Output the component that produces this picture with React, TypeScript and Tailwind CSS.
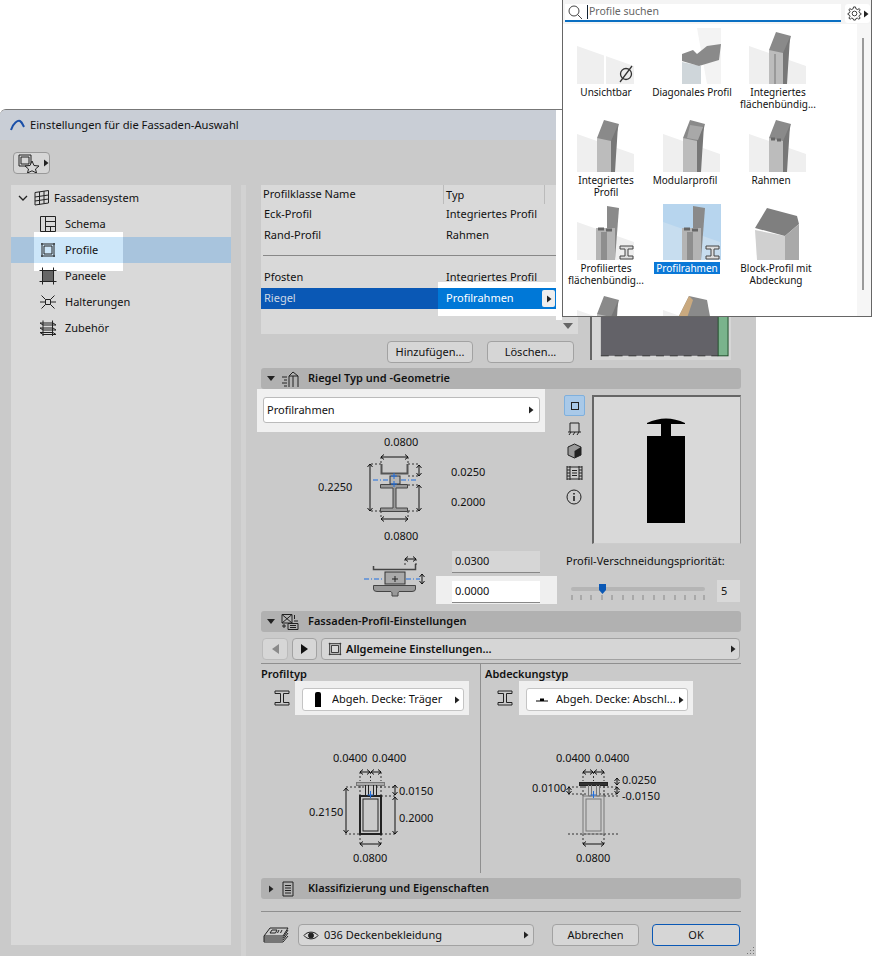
import React from 'react';

const Caret = ({ className = '' }: { className?: string }) => (
  <svg width="6" height="8" viewBox="0 0 6 8" className={className}><path d="M1 0.5 L5.5 4 L1 7.5 Z" fill="#222" /></svg>
);

// tree + section icons
const GridIcon = () => (
  <svg width="18" height="18" viewBox="0 0 18 18" fill="none" stroke="#222"><path d="M3 3.5 L16.5 1.5 V14 L3 16 Z M3 8 L16.5 6 M3 12 L16.5 10 M7.5 3 V15.5 M12 2 V14.5" /></svg>
);
const SchemaIcon = () => (
  <svg width="18" height="18" viewBox="0 0 18 18" fill="none" stroke="#222"><path d="M1.5 1.5 H16.5 V16.5 H1.5 Z M6.5 1.5 V16.5 M6.5 6.5 H16.5 M6.5 11.5 H16.5 M11.5 11.5 V16.5" /></svg>
);
const ProfileIcon = ({ size = 18 }: { size?: number }) => (
  <svg width={size} height={size} viewBox="0 0 18 18" fill="none" stroke="#222"><path d="M3 3 H15 V15 H3 Z M5 5 H13 V13 H5 Z M2 3 H3 M15 3 H16 M2 15 H3 M15 15 H16 M3 2 V3 M15 2 V3 M3 15 V16 M15 15 V16" /></svg>
);
const PanelIcon = () => (
  <svg width="18" height="18" viewBox="0 0 18 18" fill="none" stroke="#222"><path d="M3.5 3.5 H14.5 V14.5 H3.5 Z" fill="#666" /><path d="M0.5 3.5 H17.5 M0.5 14.5 H17.5 M3.5 0.5 V17.5 M14.5 0.5 V17.5" /></svg>
);
const BracketIcon = () => (
  <svg width="18" height="18" viewBox="0 0 18 18" fill="none" stroke="#222"><path d="M6.5 6.5 H11.5 V11.5 H6.5 Z M6.5 6.5 L2.5 2.5 M11.5 6.5 L15.5 2.5 M6.5 11.5 L2.5 15.5 M11.5 11.5 L15.5 15.5 M1 9 H6.5 M11.5 9 H17" /></svg>
);
const AccessoryIcon = () => (
  <svg width="18" height="18" viewBox="0 0 18 18" fill="none" stroke="#222"><path d="M1 4 H14 L17 6 H4 Z M1 9 H14 L17 11 H4 Z M1 13.5 H14 L17 15.5 H4 Z M4 1.5 V17 M13.5 1.5 V17" /></svg>
);
const IBeam = () => (
  <svg width="16" height="16" viewBox="0 0 16 16" fill="none" stroke="#222"><path d="M1 1 H15 V3.5 H9.5 V12.5 H15 V15 H1 V12.5 H6.5 V3.5 H1 Z" strokeLinejoin="round" /></svg>
);

function TreeRow({ icon, label, selected }: { icon: React.ReactNode; label: string; selected?: boolean }) {
  return (
    <div className={`relative flex h-[26px] items-center pl-[28px] ${selected ? 'bg-[#a8c4dd]' : ''}`}>
      {selected && <div className="absolute left-[23px] top-0 h-[26px] w-[89px] bg-[#cce6f9] shadow-[0_-5px_0_#fff,0_8px_0_#fff]" />}
      <span className="relative flex w-[26px] items-center">{icon}</span>
      <span className="relative">{label}</span>
    </div>
  );
}

function Btn({ children, className = '', border = 'border-[#a2a2a2]' }: { children: React.ReactNode; className?: string; border?: string }) {
  return (
    <div className={`flex h-[22px] items-center justify-center rounded-[4px] border bg-[#d6d6d6] ${border} ${className}`}>{children}</div>
  );
}

function SectionHeader({ open = true, icon, title }: { open?: boolean; icon: React.ReactNode; title: string }) {
  return (
    <div className="relative z-10 flex h-[21px] items-center rounded-[3px] bg-[#b1b1b1] font-semibold">
      <span className="flex w-[20px] justify-center">
        {open ? <svg width="8" height="5" viewBox="0 0 8 5"><path d="M0 0 H8 L4 5 Z" fill="#222" /></svg> : <Caret />}
      </span>
      <span className="flex w-[27px] items-center">{icon}</span>
      <span>{title}</span>
    </div>
  );
}

function Label({ x, y, children }: { x: number; y: number; children: React.ReactNode }) {
  return <span className="absolute leading-[14px]" style={{ left: x, top: y - 7 }}>{children}</span>;
}

const VArrow = ({ x, y1, y2 }: { x: number; y1: number; y2: number }) => (
  <path d={`M${x} ${y1} V${y2} M${x - 2.5} ${y1 + 3} L${x} ${y1} L${x + 2.5} ${y1 + 3} M${x - 2.5} ${y2 - 3} L${x} ${y2} L${x + 2.5} ${y2 - 3}`} stroke="#111" fill="none" />
);
const HArrow = ({ y, x1, x2 }: { y: number; x1: number; x2: number }) => (
  <path d={`M${x1} ${y} H${x2} M${x1 + 3} ${y - 2.5} L${x1} ${y} L${x1 + 3} ${y + 2.5} M${x2 - 3} ${y - 2.5} L${x2} ${y} L${x2 - 3} ${y + 2.5}`} stroke="#111" fill="none" />
);

function MainDiagram() {
  return (
    <svg viewBox="261 423 299 121" width="299" height="121" className="absolute left-0 top-0">
      <g stroke="#333" strokeDasharray="2 2" fill="none">
        <path d="M371 464 H381 M408 464 H420 M381 457 V464 M408 457 V464 M371 511 H381 M408 511 H420 M381 511 V519 M408 511 V519 M408 485 H420 M408 476 H420" />
      </g>
      <path d="M381.5 464 V473.5 H407.5 V464" stroke="#555" strokeWidth="2" fill="none" />
      <rect x="390" y="476" width="10" height="8" fill="#b5b5b5" stroke="#333" />
      <path d="M380.5 484.5 H407.5 V488 H396 V508 H407.5 V511.5 H380.5 V508 H393 V488 H380.5 Z" fill="#999" stroke="#444" />
      <HArrow y={457} x1={381} x2={408} />
      <HArrow y={519} x1={381} x2={408} />
      <VArrow x={370} y1={464} y2={511} />
      <VArrow x={419} y1={465} y2={476} />
      <VArrow x={419} y1={485} y2={511} />
      <path d="M373 480 H389 M401 480 H416" stroke="#1f6fe0" strokeDasharray="5 2 1 2" />
      <path d="M394 473 V479 M391 476 H397 M394 481 V487 M391 484 H397" stroke="#1f6fe0" />
    </svg>
  );
}

function SmallDiagram() {
  return (
    <svg width="70" height="50" viewBox="360 552 70 50" className="mt-[8px]">
      <path d="M373.5 566 V569.5 H415.5 V564" fill="none" stroke="#444" strokeWidth="1.5" />
      <rect x="385" y="572" width="20" height="12" fill="#aaa" stroke="#333" />
      <path d="M373.5 585.5 H415.5 V589 Q415.5 591.5 412 591.5 H399 Q397.5 592 398 596 H392 Q392.5 592 391 591.5 H377 Q373.5 591.5 373.5 589 Z" fill="#999" stroke="#444" />
      <path d="M405 565 V559 M416 565 V559" stroke="#333" strokeDasharray="2 2" />
      <HArrow y={559} x1={405} x2={416} />
      <VArrow x={422} y1={574} y2={584} />
      <path d="M364 579 H384 M406 579 H420" stroke="#1f6fe0" strokeDasharray="5 2 1 2" />
      <path d="M395 576 V582 M392 579 H398" stroke="#222" />
    </svg>
  );
}

function ProfileDiagram({ dim, left }: { dim: 'cover' | 'profile'; left: string }) {
  const box = dim === 'profile' ? '#222' : '#777';
  return (
    <svg width="100" height="125" viewBox="340 745 100 125" className={`absolute top-0 ${left}`}>
      <g stroke="#333" strokeDasharray="2 2" fill="none">
        <path d="M360 773 V782 M381 773 V782 M370.5 773 V782 M360 787 V797 M381 787 V797 M360 835 V846 M381 835 V846 M345 835 H396 M381 797 H396 M376 788 H396" />
        {dim === 'profile' && <path d="M346 788 H365" />}
        {dim === 'cover' && <path d="M345 788 H365 M345 795 H366 M376 795 H396" />}
      </g>
      <HArrow y={773} x1={360} x2={370} />
      <HArrow y={773} x1={371} x2={381} />
      <HArrow y={845} x1={360} x2={381} />
      <rect x="356.5" y="783.5" width="28" height="3" fill={dim === 'profile' ? '#aaa' : '#333'} stroke={dim === 'profile' ? '#777' : '#222'} />
      <path d="M365.5 786 V797 H368.5 V786 M373.5 786 V797 H376.5 V786" stroke={box} fill="none" />
      <rect x="360" y="797" width="21" height="38" fill="none" stroke={box} strokeWidth={dim === 'profile' ? 2 : 1} />
      <rect x="363" y="800" width="15" height="32" fill="none" stroke={box} />
      {dim === 'profile' ? (
        <>
          <VArrow x={346} y1={789} y2={834} />
          <VArrow x={395} y1={786} y2={796} />
          <VArrow x={395} y1={798} y2={835} />
        </>
      ) : (
        <>
          <VArrow x={346} y1={788} y2={795} />
          <VArrow x={394} y1={779} y2={786} />
          <VArrow x={394} y1={788} y2={795} />
        </>
      )}
      <path d="M370.5 792 V799 M367.5 796 H373.5" stroke="#1f6fe0" />
    </svg>
  );
}

type ThumbKind = 'none' | 'diag' | 'flat' | 'solid' | 'modular' | 'frame' | 'shaped' | 'block' | 'wood';

function Thumb({ kind, badge, selected }: { kind: ThumbKind; badge?: 'none' | 'i'; selected?: boolean }) {
  return (
    <svg width="58" height="56" viewBox="0 0 58 56" className={selected ? 'bg-[#b7d5ee]' : ''}>
      {kind !== 'block' && kind !== 'diag' && <path d="M0 18 L57 38 V56 H0 Z" fill={selected ? '#c7ddef' : '#efefef'} />}
      {kind === 'none' && <path d="M28 26 V56" stroke="#fff" strokeWidth="2" />}
      {(kind === 'flat' || kind === 'solid' || kind === 'frame' || kind === 'modular') && (
        <>
          <path d="M20 22 L27 4 L42 8 L37 28 V56 H20 Z" fill="#8a8a8a" />
          <path d="M20 22 L34 25 V56 H20 Z" fill="#bcbcbc" />
          <path d="M34 25 L41 9 L38 56 H34 Z" fill="#777" />
          {kind === 'frame' && <path d="M22 23 H26 M28 24 H32" stroke="#666" strokeWidth="3" />}
          {kind === 'modular' && <path d="M27 9 L40 11 L35 24 L24 22 Z" fill="#a8a8a8" />}
          {kind === 'flat' && <path d="M26 26 V56" stroke="#999" strokeWidth="2" />}
        </>
      )}
      {kind === 'diag' && (
        <>
          <path d="M34 0 L58 0 V56 H44 Z" fill="#f3f3f3" />
          <path d="M19 34 V56 H38 V38 Z" fill="#cfd6da" />
          <path d="M19 26 L30 22 L34 26 L44 18 L58 16 L56 32 L36 38 L19 33 Z" fill="#8a8a8a" />
        </>
      )}
      {kind === 'shaped' && (
        <>
          <path d="M30 2 L42 4 L38 56 H30 Z" fill="#8a8a8a" />
          <path d="M19 24 H38 V56 H19 Z" fill="#b4b4b4" />
          <path d="M24 28 H30 V56 H24 Z" fill="#8e8e8e" />
          <path d="M21 25 H27 M29 26 H35" stroke="#666" strokeWidth="3" />
        </>
      )}
      {kind === 'block' && (
        <>
          <path d="M6 26 L36 32 V56 H8 Z" fill="#d0d0d0" />
          <path d="M6 24 L18 4 L48 12 L50 20 L36 32 Z" fill="#7f7f7f" />
          <path d="M36 32 L50 20 V56 H36 Z" fill="#a9a9a9" />
        </>
      )}
      {kind === 'wood' && (
        <>
          <path d="M16 24 L26 4 L44 8 L48 30 Z" fill="#8a8a8a" />
          <path d="M16 24 L26 4 L30 8 L24 26 Z" fill="#c9a97f" />
        </>
      )}
      {badge === 'none' && (
        <g stroke="#333" strokeWidth="1.3" fill="none"><circle cx="49" cy="46" r="5.5" /><path d="M43 54 L55 38" /></g>
      )}
      {badge === 'i' && (
        <path d="M43 42 H56 V45 H51 V52 H56 V55 H43 V52 H48 V45 H43 Z" fill="#ddd" stroke="#444" strokeLinejoin="round" />
      )}
    </svg>
  );
}

const thumbs: { kind: ThumbKind; badge?: 'none' | 'i'; lines: string[]; shift?: string; selected?: boolean }[] = [
  { kind: 'none', badge: 'none', lines: ['Unsichtbar'] },
  { kind: 'diag', lines: ['Diagonales Profil'] },
  { kind: 'flat', lines: ['Integriertes', 'flächenbündig...'] },
  { kind: 'solid', lines: ['Integriertes', 'Profil'] },
  { kind: 'modular', lines: ['Modularprofil'], shift: 'pr-[14px]' },
  { kind: 'frame', lines: ['Rahmen'], shift: 'pr-[14px]' },
  { kind: 'shaped', badge: 'i', lines: ['Profiliertes', 'flächenbündig...'] },
  { kind: 'shaped', badge: 'i', lines: ['Profilrahmen'], shift: 'pr-[10px]', selected: true },
  { kind: 'block', lines: ['Block-Profil mit', 'Abdeckung'], shift: 'pr-[4px]' },
  { kind: 'solid', lines: [] },
  { kind: 'wood', lines: [] },
];

function PopupPanel() {
  return (
    <>
      <div className="absolute left-[556px] top-[110px] h-[210px] w-[6px] bg-white" />
      <div className="absolute left-[562px] top-0 flex h-[317px] w-[310px] flex-col border-x border-b border-[#666] bg-white">
        <div className="flex h-[24px] shrink-0 items-start bg-[#f4f4f4] pl-[2px] pt-[4px]">
          <div className="flex h-[18px] w-[276px] items-center border-b-2 border-[#0a6fc2] bg-white pl-[2px] text-[10.5px] text-[#666]">
            <svg width="16" height="16" viewBox="0 0 16 16" fill="none" stroke="#444"><circle cx="7" cy="7" r="5" /><path d="M10.5 10.5 L15 15" /></svg>
            <span className="ml-[4px] h-[14px] w-px bg-[#123]" />
            <span className="ml-px">Profile suchen</span>
          </div>
          <div className="ml-[4px] flex h-[19px] w-[25px] items-center justify-center gap-px rounded-[3px] bg-white">
            <svg width="15" height="15" viewBox="0 0 16 16" fill="none" stroke="#333"><circle cx="8" cy="8" r="2.5" /><path d="M7 1 H9 L9.5 3 L11.5 3.8 L13 2.7 L14 4.2 L12.8 5.7 L13.4 7.3 L15 8 V9 L13.4 9.7 L12.8 11 L14 13 L12.6 14 L11 12.9 L9.5 13.4 L9 15 H7 L6.5 13.4 L5 12.9 L3.4 14 L2 13 L3.2 11 L2.6 9.7 L1 9 V8 L2.6 7.3 L3.2 5.7 L2 4.2 L3 2.7 L4.5 3.8 L6.5 3 Z" /></svg>
            <Caret />
          </div>
        </div>
        <div className="relative flex-1 overflow-hidden">
          <div className="grid auto-rows-[88px] grid-cols-[86px_86px_86px] pt-[4px] text-[10px]">
            {thumbs.map((t, i) => (
              <div key={i} className="flex flex-col items-center text-center">
                <Thumb kind={t.kind} badge={t.badge} selected={t.selected} />
                <div className={`mt-[2px] flex w-full flex-col items-center ${t.shift ?? ''}`}>
                  {t.lines.map((l) => (
                    <span key={l} className={`block h-[12px] whitespace-nowrap leading-[12px] ${t.selected ? 'bg-[#0a78d7] px-[2px] text-white' : ''}`}>{l}</span>
                  ))}
                </div>
              </div>
            ))}
          </div>
          <div className="absolute right-0 top-0 h-full w-[14px] bg-[#f6f6f6]">
            <div className="absolute left-[5px] top-[14px] h-[252px] w-[2px] bg-[#9a9a9a]" />
          </div>
        </div>
      </div>
    </>
  );
}

function PreviewWall() {
  return (
    <svg width="141" height="175" viewBox="0 0 141 175" className="border-l-2 border-[#666] bg-[#d6d6d6]">
      <rect x="9" y="0" width="119" height="172" fill="#636268" />
      <rect x="128" y="0" width="10" height="172" fill="#7ab38c" stroke="#1f4f2a" />
      <path d="M9 172 H128" stroke="#333" strokeDasharray="8 6" />
    </svg>
  );
}

function ProfileSelect({ swatch, label }: { swatch: React.ReactNode; label: string }) {
  return (
    <div className="h-[34px] w-[174px] bg-[#efefef] pl-[7px] pt-[7px]">
      <div className="flex h-[23px] w-[162px] items-center rounded-[3px] border border-[#c4c4c4] bg-white pr-[3px]">
        <span className="flex w-[29px] justify-center">{swatch}</span>
        <span className="flex-1 truncate">{label}</span>
        <Caret />
      </div>
    </div>
  );
}

export default function App() {
  return (
    <div className="relative h-[956px] w-[872px] overflow-hidden bg-white pt-[109px] font-['Noto_Sans',sans-serif] text-[11px] text-[#111]">
      <div className="relative flex h-[847px] w-[756px] flex-col overflow-hidden rounded-t-[6px] border-t border-[#777] bg-[#cacaca]">
        {/* title bar */}
        <div className="flex h-[30px] shrink-0 items-center bg-[#c9ced6] pl-[10px] text-[11.2px]">
          <svg width="16" height="12" viewBox="0 0 16 12" fill="none"><path d="M1 11 C3 4 8 1 10 2 C12 3 13 6 14 8" stroke="#1a4fa8" strokeWidth="2" /></svg>
          <span className="ml-[4px]">Einstellungen für die Fassaden-Auswahl</span>
        </div>

        {/* toolbar */}
        <div className="flex h-[45px] shrink-0 items-start pl-[13px] pt-[12px]">
          <div className="flex h-[22px] w-[37px] items-center gap-[2px] rounded-[4px] border border-[#999] bg-[#d6d6d6] pl-[3px]">
            <svg width="24" height="20" viewBox="0 0 24 20" fill="none" stroke="#222">
              <path d="M2 2 H14 V13 H2 Z M4 4 H12 V11 H4 Z" />
              <path d="M15 8 L17 12.5 L22 13 L18.5 16 L19.5 20 L15 17.8 L10.5 20 L11.5 16 L8 13 L13 12.5 Z" fill="#d6d6d6" />
            </svg>
            <Caret />
          </div>
        </div>

        <div className="flex flex-1">
          {/* tree */}
          <div className="ml-[11px] h-[760px] w-[220px] shrink-0 bg-[#d9d9d9]">
            <div className="flex h-[26px] items-center pl-[7px]">
              <svg width="10" height="6" viewBox="0 0 10 6" fill="none" stroke="#222" strokeWidth="1.3"><path d="M1 1 L5 5 L9 1" /></svg>
              <span className="mx-[4px] flex"><GridIcon /></span>
              <span>Fassadensystem</span>
            </div>
            <TreeRow icon={<SchemaIcon />} label="Schema" />
            <TreeRow icon={<ProfileIcon />} label="Profile" selected />
            <TreeRow icon={<PanelIcon />} label="Paneele" />
            <TreeRow icon={<BracketIcon />} label="Halterungen" />
            <TreeRow icon={<AccessoryIcon />} label="Zubehör" />
          </div>
          <div className="ml-[10px] w-[5px] shrink-0 bg-[#d2d2d2]" />

          {/* settings */}
          <div className="ml-[15px] w-[480px] shrink-0">
            <div className="flex h-[183px]">
              <div className="w-[317px]">
                <div className="relative h-[149px] bg-[#d9d9d9]">
                  <div className="flex h-[19px] items-center">
                    <span className="w-[182px] pl-[2px]">Profilklasse Name</span>
                    <span className="h-full w-[101px] border-l border-[#bbb] pl-[2px] leading-[19px]">Typ</span>
                    <span className="h-full border-l border-[#bbb]" />
                  </div>
                  <div className="flex h-[21px] items-center"><span className="w-[185px] pl-[3px]">Eck-Profil</span><span>Integriertes Profil</span></div>
                  <div className="flex h-[21px] items-center"><span className="w-[185px] pl-[3px]">Rand-Profil</span><span>Rahmen</span></div>
                  <div className="mx-[2px] mt-[9px] h-px w-[293px] bg-[#888]" />
                  <div className="mt-[11px] flex h-[21px] items-center"><span className="w-[185px] pl-[3px]">Pfosten</span><span>Integriertes Profil</span></div>
                  <div className="flex h-[21px] w-[295px] items-center bg-[#0a58b5] text-white">
                    <span className="w-[177px] pl-[3px] text-[#cfd8e6]">Riegel</span>
                    <div className="flex h-full flex-1 items-center bg-[#0078d7] pl-[8px] pr-[1px] shadow-[0_-6px_0_#fff,0_7px_0_#fff]">
                      <span className="flex-1">Profilrahmen</span>
                      <span className="flex h-[17px] w-[13px] items-center justify-center rounded-[2px] bg-[#eee]"><Caret /></span>
                    </div>
                  </div>
                  <svg width="10" height="6" viewBox="0 0 10 6" className="absolute bottom-[5px] right-[5px]"><path d="M0 0 H10 L5 6 Z" fill="#666" /></svg>
                </div>
                <div className="mt-[7px] flex">
                  <Btn className="ml-[126px] w-[86px]">Hinzufügen...</Btn>
                  <Btn className="ml-[14px] w-[87px]">Löschen...</Btn>
                </div>
              </div>
              <div className="ml-[12px]"><PreviewWall /></div>
            </div>

            <SectionHeader title="Riegel Typ und -Geometrie" icon={
              <svg width="18" height="18" viewBox="0 0 18 18" fill="none" stroke="#222"><path d="M8 6 L12 2 L17 6 V17 M8 6 V17 M12 6 V17 M8 6 H17 M1 7 H6 M3 10 H6 M1 13 H6 M3 16 H6" /></svg>
            } />

            {/* type + geometry */}
            <div className="flex h-[222px]">
              <div className="w-[303px]">
                <div className="-ml-[4px] h-[43px] w-[288px] bg-[#f0f0f0] pl-[6px] pt-[8px]">
                  <div className="flex h-[26px] w-[277px] items-center rounded-[3px] border border-[#bbb] bg-white pl-[3px] pr-[5px]">
                    <span className="flex-1">Profilrahmen</span>
                    <Caret />
                  </div>
                </div>
                <div className="relative -mt-[9px] h-[121px]">
                  <MainDiagram />
                  <Label x={123} y={19}>0.0800</Label>
                  <Label x={57} y={64}>0.2250</Label>
                  <Label x={190} y={49}>0.0250</Label>
                  <Label x={190} y={79}>0.2000</Label>
                  <Label x={123} y={113}>0.0800</Label>
                </div>
                <div className="flex">
                  <div className="ml-[99px]"><SmallDiagram /></div>
                  <div className="ml-[22px] mt-[7px] flex flex-col">
                    <div className="flex h-[22px] w-[88px] items-center border-b border-[#888] bg-[#d6d6d6] pl-[3px]">0.0300</div>
                    <div className="-ml-[16px] mt-[3px] h-[28px] w-[121px] bg-[#efefef] pl-[16px] pt-[5px]">
                      <div className="flex h-[22px] w-[88px] items-center border-b border-[#888] bg-white pl-[3px]">0.0000</div>
                    </div>
                  </div>
                </div>
              </div>
              <div className="w-[177px] pt-[6px]">
                <div className="flex">
                  <div className="flex w-[28px] flex-col items-start">
                    <div className="flex h-[21px] w-[21px] items-center justify-center rounded-[2px] border border-[#7fb0dd] bg-[#a9c9e8]">
                      <span className="h-[8px] w-[8px] border border-[#222]" />
                    </div>
                    <span className="ml-[3px] mt-[5px] flex h-[16px]">
                      <svg width="15" height="15" viewBox="0 0 15 15" fill="none" stroke="#222"><path d="M3 11 V2 H12 V11 M1 11 H14 M2 14 L4 11 M6 14 L8 11 M10 14 L12 11" /></svg>
                    </span>
                    <span className="ml-[3px] mt-[6px] flex h-[16px]">
                      <svg width="15" height="16" viewBox="0 0 15 16"><path d="M7.5 1 L14 4 V12 L7.5 15 L1 12 V4 Z" fill="#999" stroke="#222" /><path d="M7.5 8 L14 4 V12 L7.5 15 Z" fill="#222" /></svg>
                    </span>
                    <span className="ml-[2px] mt-[6px] flex h-[16px]">
                      <svg width="17" height="16" viewBox="0 0 17 16" fill="none" stroke="#222"><path d="M1 2 H16 M1 14 H16 M4 1 V15 M13 1 V15 M1 1 V15 M16 1 V15 M6 5.5 H11 M6 8 H11 M6 10.5 H11 M1 5 H4 M1 8 H4 M1 11 H4 M13 5 H16 M13 8 H16 M13 11 H16" /></svg>
                    </span>
                    <span className="ml-[2px] mt-[8px] flex h-[16px]">
                      <svg width="16" height="16" viewBox="0 0 16 16" fill="none" stroke="#222"><circle cx="8" cy="8" r="7" /><path d="M8 7 V12 M8 4 V5.5" strokeWidth="1.6" /></svg>
                    </span>
                  </div>
                  <div className="h-[149px] w-[149px] border border-b-[#ccc] border-l-2 border-l-[#666] border-r-[#999] border-t-2 border-t-[#666] bg-[#d9d9d9]">
                    <svg width="146" height="146" viewBox="594 397 146 146">
                      <path d="M647 423 Q666 414 685 423 V424 H671 V436 H685 V523 H647 V436 H661 V424 H647 Z" fill="#000" />
                    </svg>
                  </div>
                </div>
                <div className="ml-[2px] mt-[10px] leading-[14px]">Profil-Verschneidungspriorität:</div>
                <div className="mt-[12px] flex items-start">
                  <div className="relative ml-[7px] mt-[7px] h-[14px] w-[134px]">
                    <div className="h-[4px] rounded-[2px] bg-[#b5b5b5]" />
                    <svg width="134" height="6" className="mt-[4px]"><path d="M1 0 V5 M10 0 V5 M20 0 V5 M31 0 V5 M41 0 V5 M52 0 V5 M62 0 V5 M72 0 V5 M83 0 V5 M93 0 V5 M104 0 V5 M114 0 V5 M124 0 V5 M133 0 V5" stroke="#888" /></svg>
                    <svg width="7" height="10" viewBox="0 0 7 10" className="absolute left-[28px] top-[-3px]"><path d="M0 0 H7 V6 L3.5 10 L0 6 Z" fill="#0a58b5" /></svg>
                  </div>
                  <div className="ml-[12px] flex h-[22px] w-[23px] items-center bg-[#d9d9d9] pl-[4px]">5</div>
                </div>
              </div>
            </div>

            <SectionHeader title="Fassaden-Profil-Einstellungen" icon={
              <svg width="18" height="18" viewBox="0 0 18 18" fill="none" stroke="#222"><path d="M1 1.5 H11 V10 H1 Z M1 1.5 L11 10 M11 1.5 L1 10 M13.5 2 V6 M13 8 H17 M7 10.5 H17 V16.5 H7 Z M9 12.5 H15 M9 14.5 H15 M1 13 H5 M3 11 V15" /></svg>
            } />

            {/* page nav */}
            <div className="mt-[6px] flex gap-[4px] pl-[1px]">
              <Btn className="w-[26px]" border="border-[#bbb]"><svg width="7" height="10" viewBox="0 0 7 10"><path d="M7 0 V10 L0 5 Z" fill="#8a8a8a" /></svg></Btn>
              <Btn className="w-[25px]"><svg width="7" height="10" viewBox="0 0 7 10"><path d="M0 0 V10 L7 5 Z" fill="#111" /></svg></Btn>
              <Btn className="w-[419px] justify-start pl-[5px] pr-[3px] font-semibold">
                <ProfileIcon size={16} />
                <span className="ml-[3px] flex-1">Allgemeine Einstellungen...</span>
                <Caret />
              </Btn>
            </div>
            <div className="mt-[3px] h-px bg-[#8f8f8f]" />

            {/* profile + cover */}
            <div className="flex h-[214px]">
              <div className="relative h-[209px] w-[220px] border-r border-[#8f8f8f]">
                <div className="mt-[3px] font-semibold leading-[14px]">Profiltyp</div>
                <div className="flex items-center pl-[13px]">
                  <IBeam />
                  <div className="ml-[5px]"><ProfileSelect label="Abgeh. Decke: Träger" swatch={<span className="h-[15px] w-[6px] rounded-t-[2px] bg-black" />} /></div>
                </div>
                <div className="absolute left-0 top-[80px] h-[125px] w-full"><ProfileDiagram dim="profile" left="left-[79px]" />
                  <Label x={72} y={14}>0.0400</Label>
                  <Label x={111} y={14}>0.0400</Label>
                  <Label x={138} y={47}>0.0150</Label>
                  <Label x={48} y={68}>0.2150</Label>
                  <Label x={138} y={74}>0.2000</Label>
                  <Label x={92} y={114}>0.0800</Label>
                </div>
              </div>
              <div className="relative flex-1">
                <div className="ml-[4px] mt-[3px] font-semibold leading-[14px]">Abdeckungstyp</div>
                <div className="flex items-center pl-[16px]">
                  <IBeam />
                  <div className="ml-[6px]"><ProfileSelect label="Abgeh. Decke: Abschl..." swatch={<svg width="12" height="4" viewBox="0 0 12 4"><path d="M0 2.5 H4 V0.5 H8 V2.5 H12 V3.5 H0 Z" fill="#000" /></svg>} /></div>
                </div>
                <div className="absolute left-0 top-[80px] h-[125px] w-full"><ProfileDiagram dim="cover" left="left-[82px]" />
                  <Label x={75} y={14}>0.0400</Label>
                  <Label x={114} y={14}>0.0400</Label>
                  <Label x={141} y={36}>0.0250</Label>
                  <Label x={51} y={44}>0.0100</Label>
                  <Label x={141} y={52}>-0.0150</Label>
                  <Label x={95} y={114}>0.0800</Label>
                </div>
              </div>
            </div>

            <SectionHeader open={false} title="Klassifizierung und Eigenschaften" icon={
              <svg width="14" height="16" viewBox="0 0 14 16" fill="none" stroke="#222"><path d="M2 1 H12 V15 H2 Z M4 4.5 H10 M4 7 H10 M4 9.5 H10 M4 12 H10" /></svg>
            } />
            <div className="mt-[12px] h-px bg-[#8f8f8f]" />

            {/* footer */}
            <div className="mt-[12px] flex items-center">
              <svg width="26" height="18" viewBox="0 0 26 18" fill="none" stroke="#222" className="ml-[2px]"><path d="M7 2 H25 L20 10 H1 Z M9 4 H14 L12.5 7 H7 Z M1 10 V12 H20 L25 4 M1 12 V14 H20 L25 7 M1 14 V16 H20 L25 10 M16 4 L14.5 7 M19 4 L17.5 7" /></svg>
              <Btn className="ml-[9px] w-[236px] justify-start px-[4px]">
                <svg width="16" height="11" viewBox="0 0 16 11" fill="none" stroke="#222"><path d="M1 5.5 C4 1 12 1 15 5.5 C12 10 4 10 1 5.5 Z" /><circle cx="8" cy="5.5" r="2.5" fill="#222" /></svg>
                <span className="ml-[5px] flex-1">036 Deckenbekleidung</span>
                <Caret />
              </Btn>
              <Btn className="ml-[18px] w-[87px]">Abbrechen</Btn>
              <Btn className="ml-[13px] w-[88px]" border="border-[#0a58b5]">OK</Btn>
            </div>
          </div>
        </div>

        {/* resize grip */}
        <svg width="9" height="9" viewBox="0 0 9 9" className="absolute bottom-[1px] right-[1px]"><path d="M7 1 H8 V2 H7 Z M4 4 H5 V5 H4 Z M7 4 H8 V5 H7 Z M1 7 H2 V8 H1 Z M4 7 H5 V8 H4 Z M7 7 H8 V8 H7 Z" fill="#777" /></svg>
      </div>
      <PopupPanel />
    </div>
  );
}
